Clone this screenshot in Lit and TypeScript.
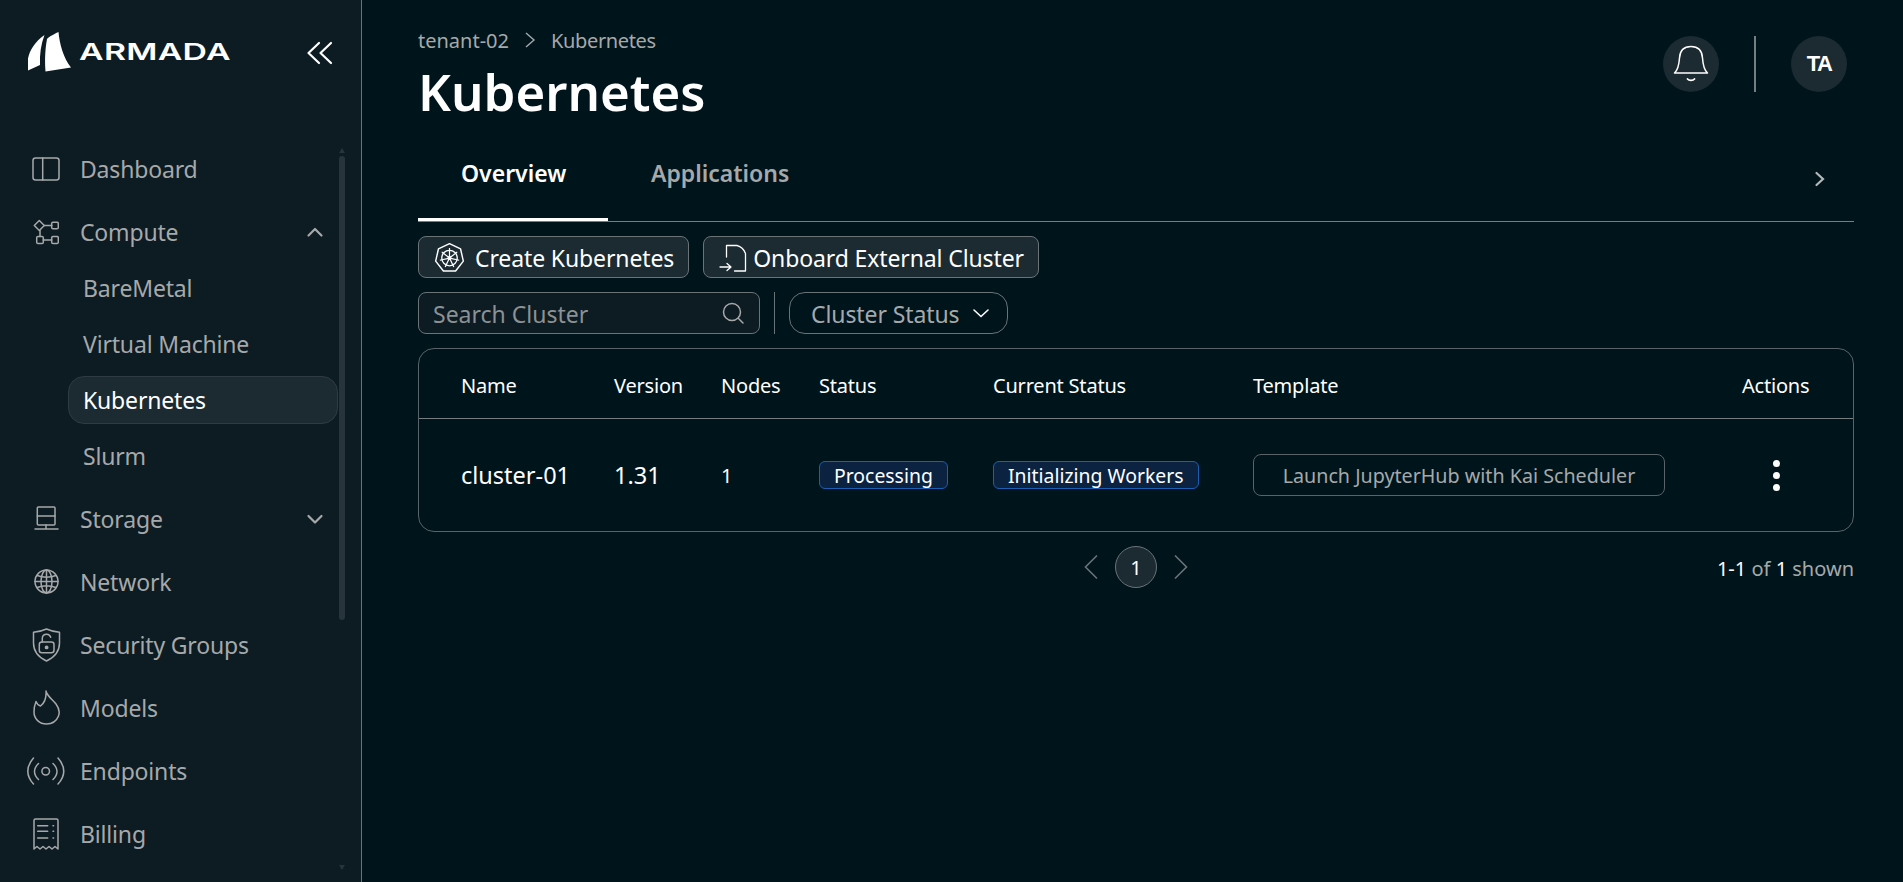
import { LitElement, html, css, svg } from "lit";
import { customElement } from "lit/decorators.js";

const ic = (body: unknown, w = 26, h = 26) => html`<svg class="ic" width=${w} height=${h} viewBox="0 0 ${w} ${h}" fill="none" stroke="currentColor" stroke-width="1.500" stroke-linecap="round" stroke-linejoin="round">${body}</svg>`;

const icons: Record<string, unknown> = {
  dash: ic(svg`<rect x="1" y="1" width="26" height="22" rx="2.500"/><path d="M10.700 1v22"/>`, 28, 24),
  compute: ic(svg`<path d="M6.300 1.500l5 5-5 5-5-5z"/><rect x="18.700" y="3.200" width="6.600" height="6.600" rx="1.300"/><rect x="3.700" y="17.500" width="6.600" height="7" rx="1.300"/><rect x="18.700" y="17.500" width="6.600" height="7" rx="1.300"/><path d="M11.300 6.500h7.400M7 11.500v6M10.300 21h8.400"/>`),
  storage: ic(svg`<rect x="4.300" y="1" width="17.700" height="18" rx="1"/><path d="M4.300 10h17.700M13 19v4M2 23h23"/>`),
  network: ic(svg`<circle cx="12.500" cy="12.500" r="11.500"/><ellipse cx="12.500" cy="12.500" rx="5.500" ry="11.500"/><path d="M12.500 1v23M1 12.500h23M3 6.500Q12.500 10 22 6.500M3 18.500Q12.500 15 22 18.500"/>`, 25, 25),
  security: ic(svg`<path d="M14.500 1C10 3 5.500 4 1.500 4.300V15C1.500 24 8 30 14.500 33 21 30 27.500 24 27.500 15V4.300C23.500 4 19 3 14.500 1z"/><rect x="7.300" y="14" width="14.700" height="10.700" rx="2.500"/><path d="M10.300 14v-3.500a4.300 4.300 0 0 1 8.400-1.300"/><circle cx="14.600" cy="19.400" r="1.200" fill="currentColor"/>`, 29, 34),
  models: ic(svg`<path d="M13 1c1 5 6 8 10 13 3 4 4 8 2.500 12-2 5-6.500 8-12 8C6.500 34 1 29 1 22c0-4 1-8 2-10.500 1 2.500 2.500 4 4.500 4.500C11.500 13 13.500 8 13 1z"/>`, 27, 35),
  endpoints: ic(svg`<circle cx="18.700" cy="14.300" r="3.800"/><path d="M11.500 6.500Q3.500 14.300 11.500 22.500M26 6.500Q34 14.300 26 22.500M6.500 1Q-4.900 14.300 6.500 27M31 1Q42.500 14.300 31 27"/>`, 38, 28),
  billing: ic(svg`<path d="M1 31V2.500Q1 1 2.500 1h21Q25 1 25 2.500V31l-3-2.500-3 2.500-3-2.500-3 2.500-3-2.500-3 2.500-3-2.500z"/><path d="M4.700 7.700h10M4.700 13.300h10M4.700 20h10M20 7.700h.6M20 13.300h.6M20 20h.6"/>`, 26, 32),
};

type Item = { label: string; icon?: string; chev?: "up" | "down"; sub?: boolean; active?: boolean; first?: boolean; last?: boolean };
const items: Item[] = [
  { label: "Dashboard", icon: "dash" },
  { label: "Compute", icon: "compute", chev: "up" },
  { label: "BareMetal", sub: true, first: true },
  { label: "Virtual Machine", sub: true },
  { label: "Kubernetes", sub: true, active: true },
  { label: "Slurm", sub: true, last: true },
  { label: "Storage", icon: "storage", chev: "down" },
  { label: "Network", icon: "network" },
  { label: "Security Groups", icon: "security" },
  { label: "Models", icon: "models" },
  { label: "Endpoints", icon: "endpoints" },
  { label: "Billing", icon: "billing" },
];

@customElement("app-root")
export class AppRoot extends LitElement {
  static styles = css`
    :host { display: block; width: 1903px; height: 882px; overflow: hidden; background: #00141c; color: #fff; font-family: "Noto Sans", sans-serif; }
    * { box-sizing: border-box; }
    .page { display: flex; height: 882px; }
    .side { width: 362px; flex: none; background: #0d1b23; border-right: 1px solid #6b7377; position: relative; overflow: hidden; }
    .brand { display: flex; align-items: center; height: 72px; margin-top: 16px; padding-left: 27px; }
    .sails { flex: none; }
    .word { font-family: "Inter", sans-serif; font-weight: 600; font-size: 23px; line-height: 1; transform: scaleX(1.47); transform-origin: left center; margin-left: 8px; width: 200px; letter-spacing: 0.2px; }
    .collapse { position: absolute; left: 306px; top: 41px; color: #fff; }
    .nav { display: flex; flex-direction: column; padding-top: 49px; width: 340px; }
    .item { height: 63px; display: flex; align-items: center; font-size: 23px; letter-spacing: -0.17px; color: #a6a9aa; position: relative; padding-left: 80px; }
    .item .i { position: absolute; left: 26px; width: 40px; display: flex; align-items: center; justify-content: center; }
    .item .ic { display: block; }
    .item.sub { height: 56px; padding-left: 83px; }
    .item.first { margin-top: -3px; }
    .item.last { margin-bottom: 3px; }
    .item.sub.active { color: #fff; }
    .item.sub.active::before { content: ""; position: absolute; left: 68px; top: 4px; bottom: 4px; width: 268px; border-radius: 16px; background: #1c2a32; border: 1px solid #2f3b42; }
    .item.sub span { position: relative; }
    .item .chev { position: absolute; left: 306px; color: #a6a9aa; }
    .bar { position: absolute; left: 339px; top: 156px; width: 6px; height: 464px; border-radius: 3px; background: #28343b; }
    .tri-u, .tri-d { position: absolute; left: 339px; width: 0; height: 0; border-left: 3px solid transparent; border-right: 3px solid transparent; }
    .tri-u { top: 148px; border-bottom: 5px solid #28343b; }
    .tri-d { top: 865px; border-top: 5px solid #28343b; }

    .main { flex: 1; min-width: 0; padding: 0 49px 0 56px; position: relative; }
    .head { height: 130px; display: flex; justify-content: space-between; }
    .crumbs { display: flex; align-items: center; gap: 15px; font-size: 20px; color: #a6a9aa; height: 30px; margin-top: 25px; }
    .crumbs .last { letter-spacing: -0.35px; }
    h1 { margin: 1px 0 0; font-size: 51px; line-height: 70px; font-weight: 600; color: #fff; }
    .tools { display: flex; align-items: flex-start; padding-top: 36px; padding-right: 7px; }
    .round { width: 56px; height: 56px; border-radius: 50%; background: #1c2a32; display: flex; align-items: center; justify-content: center; color: #fff; }
    .ta { font-family: "Liberation Sans", sans-serif; font-weight: 700; font-size: 22px; letter-spacing: -1.500px; }
    .vr { width: 2px; height: 56px; background: #777d80; margin: 0 35px; }
    .tabs { display: flex; height: 92px; border-bottom: 1px solid #777d80; position: relative; align-items: flex-start; }
    .tab { height: 91px; display: flex; align-items: center; padding: 0 43px 6px; font-size: 23px; font-weight: 600; color: #a6a9aa; }
    .tab.on { color: #fff; box-shadow: inset 0 -3px 0 #fff; width: 190px; }
    .more { position: absolute; right: 28px; top: 40px; color: #b5b8b9; }
    .actions { display: flex; gap: 14px; margin-top: 14px; }
    .btn { height: 42px; display: flex; align-items: center; border: 1px solid #6b7377; border-radius: 8px; background: #1c2a32; font-size: 23px; letter-spacing: -0.12px; color: #fff; padding-top: 1px; }
    .btn.b1 { padding-left: 15px; padding-right: 14px; gap: 10px; }
    .btn.b2 { padding-left: 15px; padding-right: 14px; gap: 6px; }
    .filters { display: flex; align-items: stretch; margin-top: 14px; height: 42px; }
    .search { width: 342px; display: flex; align-items: center; justify-content: space-between; padding: 1px 14px 0; border: 1px solid #6b7377; border-radius: 8px; background: #0d1b23; font-size: 23px; color: #8b9194; }
    .search svg { color: #a6a9aa; margin-top: -1px; }
    .vr2 { width: 1px; background: #6b7377; margin: 0 14px; }
    .select { width: 219px; display: flex; align-items: center; justify-content: space-between; padding: 1px 16px 0 21px; border: 1px solid #6b7377; border-radius: 16px; font-size: 23px; letter-spacing: -0.1px; color: #a6a9aa; }
    .select svg { color: #fff; margin-top: -1px; }
    .table { margin-top: 14px; height: 184px; border: 1px solid #5a6367; border-radius: 16px; }
    .row { display: grid; grid-template-columns: 153px 107px 98px 174px 260px 489px 1fr; padding-left: 42px; align-items: center; }
    .row.h { height: 70px; padding-top: 3px; border-bottom: 1px solid #777d80; font-size: 20px; letter-spacing: -0.2px; color: #fff; }
    .row.b { height: 112px; font-size: 23.500px; }
    .nodes { font-size: 20px; }
    .pill { display: inline-flex; align-items: center; justify-content: center; height: 28px; border: 1px solid #1a5fb4; border-radius: 6px; background: #0b2340; font-size: 19.400px; padding: 0 14px; justify-self: start; }
    .tpl { width: 412px; height: 42px; display: flex; align-items: center; justify-content: center; border: 1px solid #5a6367; border-radius: 8px; font-size: 19.700px; color: #a6a9aa; }
    .dots { display: flex; flex-direction: column; gap: 5px; margin-left: 30.500px; }
    .dots i { width: 7px; height: 7px; border-radius: 50%; background: #fff; }
    .act { justify-self: start; }
    .pager { position: relative; display: flex; justify-content: center; align-items: center; height: 42px; margin-top: 14px; gap: 17px; color: #6b7377; }
    .num { width: 42px; height: 42px; border-radius: 50%; background: #1c2a32; border: 1px solid #6b7377; display: flex; align-items: center; justify-content: center; color: #fff; font-size: 20px; }
    .count { position: absolute; right: 0; top: 9px; font-size: 20px; color: #a6a9aa; }
    .count b { font-weight: 400; color: #fff; }
  `;

  render() {
    return html`<div class="page">
      <aside class="side">
        <div class="brand">
          <svg class="sails" width="44" height="40" viewBox="0 0 44 40"><path fill="#fff" d="M17.500 3C8 9.500 2.500 18.500 1 26.500V38.500l12-5.500C12.500 22 14 12 17.500 3z"/><path fill="#fff" d="M31.500 0C25 3 21 5.500 20 7c-1.500 8-2.500 19-1.500 32.500L44 35.500C36.500 26 32.500 12 31.500 0z"/></svg>
          <span class="word">ARMADA</span>
        </div>
        <svg class="collapse" width="28" height="24" viewBox="0 0 28 24" fill="none" stroke="currentColor" stroke-width="2.200" stroke-linecap="round" stroke-linejoin="round"><path d="M13 2L2.500 12 13 22M25 2L14.500 12 25 22"/></svg>
        <nav class="nav">
          ${items.map(it => html`<div class="item ${it.sub ? "sub" : ""} ${it.active ? "active" : ""} ${it.first ? "first" : ""} ${it.last ? "last" : ""}">
            ${it.icon ? html`<span class="i">${icons[it.icon]}</span>` : ""}
            <span>${it.label}</span>
            ${it.chev ? html`<svg class="chev" width="18" height="12" viewBox="0 0 18 12" fill="none" stroke="currentColor" stroke-width="2.200" stroke-linecap="round" stroke-linejoin="round"><path d=${it.chev === "up" ? "M2.500 9.500L9 3l6.500 6.500" : "M2.500 3L9 9.500 15.500 3"}/></svg>` : ""}
          </div>`)}
        </nav>
        <div class="tri-u"></div><div class="bar"></div><div class="tri-d"></div>
      </aside>
      <main class="main">
        <div class="head">
          <div>
            <div class="crumbs"><span>tenant-02</span>
              <svg width="12" height="20" viewBox="0 0 12 20" fill="none" stroke="currentColor" stroke-width="1.400"><path d="M2 3l8 7-8 7"/></svg>
              <span class="last">Kubernetes</span></div>
            <h1>Kubernetes</h1>
          </div>
          <div class="tools">
            <div class="round">
              <svg width="36" height="38" viewBox="0 0 36 38" fill="none" stroke="currentColor" stroke-width="1.500" stroke-linecap="round" stroke-linejoin="round"><path d="M1.500 28h33C31 25 30 20 29.500 13 29 5 24.500 1.500 18 1.500S7 5 6.500 13C6 20 5 25 1.500 28z"/><path d="M14.500 34c1.500 1.800 5.500 1.800 7 0" stroke-width="1.800"/></svg>
            </div>
            <div class="vr"></div>
            <div class="round ta">TA</div>
          </div>
        </div>
        <div class="tabs">
          <div class="tab on">Overview</div>
          <div class="tab">Applications</div>
          <svg class="more" width="12" height="18" viewBox="0 0 12 18" fill="none" stroke="currentColor" stroke-width="2.200" stroke-linecap="round"><path d="M2.500 3l6.500 6-6.500 6"/></svg>
        </div>
        <div class="actions">
          <div class="btn b1">
            <svg width="31" height="31" viewBox="0 0 28 28" fill="none" stroke="currentColor" stroke-width="1.300" stroke-linejoin="round"><path d="M14 1.500L24 6.300l2.500 11-7 8.900H8.500l-7-8.900L4 6.300z"/><circle cx="14" cy="14.500" r="7" stroke-width="1.200"/><path d="M14 14.500V5.500M14 14.500l7-5.600M14 14.500l8.700 2M14 14.500l3.900 8.100M14 14.500l-3.900 8.100M14 14.500l-8.700 2M14 14.500L7 8.900" stroke-width="1.100"/><circle cx="14" cy="14.500" r="1.800" fill="currentColor" stroke="none"/></svg>
            Create Kubernetes
          </div>
          <div class="btn b2">
            <svg width="28" height="28" viewBox="0 0 28 28" fill="none" stroke="currentColor" stroke-width="1.300" stroke-linecap="round" stroke-linejoin="round"><path d="M7.500 13V1.500H18c4 1 7 4 8.500 8V27H15.500"/><path d="M1 23h11M8 19.500l4 3.500-4 3.500"/></svg>
            Onboard External Cluster
          </div>
        </div>
        <div class="filters">
          <div class="search">Search Cluster
            <svg width="24" height="24" viewBox="0 0 24 24" fill="none" stroke="currentColor" stroke-width="1.500" stroke-linecap="round"><circle cx="11" cy="11" r="8.500"/><path d="M17.500 17.500L22 22"/></svg>
          </div>
          <div class="vr2"></div>
          <div class="select">Cluster Status
            <svg width="20" height="12" viewBox="0 0 20 12" fill="none" stroke="currentColor" stroke-width="1.600" stroke-linecap="round"><path d="M3 3l7 6.500L17 3"/></svg>
          </div>
        </div>
        <div class="table">
          <div class="row h"><span>Name</span><span>Version</span><span>Nodes</span><span>Status</span><span>Current Status</span><span>Template</span><span>Actions</span></div>
          <div class="row b"><span>cluster-01</span><span>1.31</span><span class="nodes">1</span><span class="pill">Processing</span><span class="pill">Initializing Workers</span><span class="tpl">Launch JupyterHub with Kai Scheduler</span><span class="dots act"><i></i><i></i><i></i></span></div>
        </div>
        <div class="pager">
          <svg width="14" height="26" viewBox="0 0 14 26" fill="none" stroke="currentColor" stroke-width="1.600"><path d="M13 1.500L1.500 13 13 24.500"/></svg>
          <div class="num">1</div>
          <svg width="14" height="26" viewBox="0 0 14 26" fill="none" stroke="currentColor" stroke-width="1.600"><path d="M1 1.500L12.500 13 1 24.500"/></svg>
          <div class="count"><b>1-1</b> of <b>1</b> shown</div>
        </div>
      </main>
    </div>`;
  }
}
